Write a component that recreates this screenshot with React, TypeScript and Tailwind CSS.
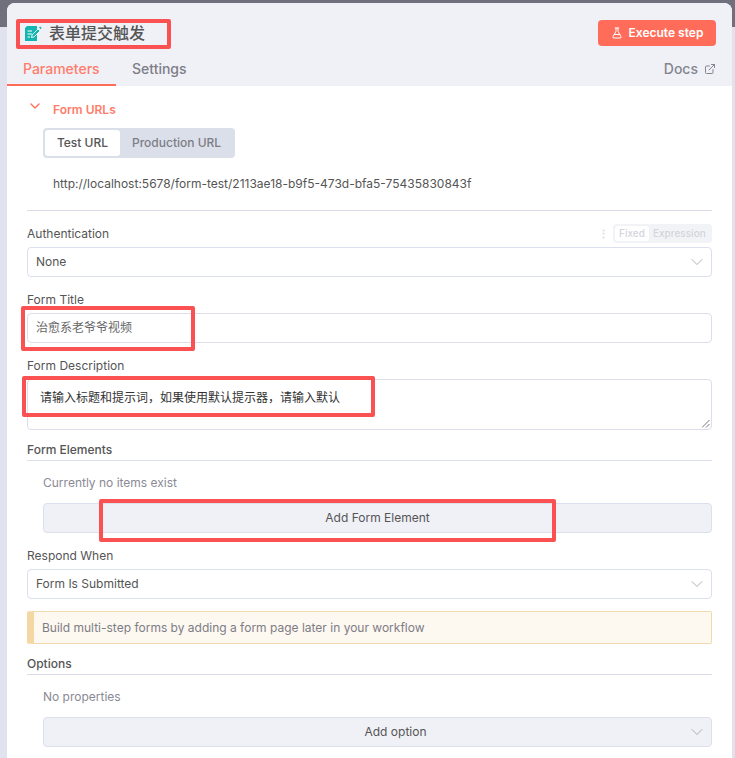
import { ChevronDown, ExternalLink, FlaskConical } from "lucide-react";

const FONT = "font-['Inter','Noto_Sans_CJK_SC',sans-serif]";

function Label({ text }: { text: string }) {
  return <div className="text-[12px] leading-[14px] text-[#555]">{text}</div>;
}

function SelectBox({ value }: { value: string }) {
  return (
    <div className="flex h-[30px] items-center justify-between rounded-[4px] border border-[#dcdfec] bg-white pl-2 pr-[4px] text-[12px] text-[#555]">
      <span>{value}</span>
      <ChevronDown size={20} strokeWidth={0.8} className="text-[#8a8a92]" />
    </div>
  );
}

function FormIcon() {
  return (
    <svg width="17" height="15" viewBox="0 0 17 15" className="shrink-0">
      <path d="M0 2 2 0h10v15H0z" fill="#12b5b0" />
      <path d="M2.5 5h4.5M2.5 8h4.5M2.5 11h2.5" stroke="#fff" strokeWidth="1" fill="none" />
      <path d="m6.5 11.5.6-2.6 6-6 2 2-6 6z" fill="#12b5b0" stroke="#fff" strokeWidth="0.9" />
      <path d="m14 1.6 1.2-1 1.4 1.4-1 1.2z" fill="#12b5b0" />
    </svg>
  );
}

function Mark({ className }: { className: string }) {
  return <div className={`pointer-events-none absolute rounded-[2px] border-4 border-[#fa5252] ${className}`} />;
}

export default function App() {
  return (
    <div className={`relative h-[758px] w-[735px] overflow-hidden bg-[#e0e3ee] ${FONT}`}>
      <div className="absolute left-0 top-0 h-[27px] w-full bg-[#706f7c]" />
      <div className="relative mx-[7px] mt-[3px] flex h-[755px] w-[725px] flex-col overflow-hidden rounded-t-[8px] bg-white">
        {/* header */}
        <div className="h-[83px] bg-[#f0f1f7]">
          <div className="flex h-[56px] items-center justify-between pl-[18px] pr-4 pt-[4px]">
            <div className="flex items-center gap-[7px]">
              <FormIcon />
              <span className="text-[16px] font-medium text-[#555]">表单提交触发</span>
            </div>
            <div className="flex h-[26px] w-[118px] items-center justify-center gap-[6px] rounded-[4px] bg-[#ff6d5a] text-[12px] font-semibold text-white">
              <FlaskConical size={12} />
              <span>Execute step</span>
            </div>
          </div>
          <div className="flex h-[27px] items-start justify-between text-[14px]">
            <div className="flex">
              <div className="h-[27px] w-[109px] border-b-2 border-[#ff6d5a] pl-4 font-medium leading-[19px] text-[#ff7c6b]">Parameters</div>
              <div className="ml-4 font-medium leading-[19px] text-[#7d7d87]">Settings</div>
            </div>
            <div className="flex items-center gap-[6px] pr-[16px] font-medium leading-[19px] text-[#85858f]">
              <span>Docs</span>
              <ExternalLink size={12} />
            </div>
          </div>
        </div>

        {/* body */}
        <div className="px-5">
          <div className="flex items-center pt-[17px] text-[12px] font-semibold leading-[14px] text-[#ff7c6b]">
            <ChevronDown size={16} className="-mt-[8px] mr-[10px] text-[#ff6d5a]" />
            <span>Form URLs</span>
          </div>
          <div className="ml-4 mt-[11px] flex h-[30px] w-[192px] items-center rounded-[4px] bg-[#dbdfe9] pl-[2px] text-[12px] font-medium">
            <div className="flex h-[26px] w-[75px] items-center justify-center rounded-[3px] bg-white text-[#555]">Test URL</div>
            <div className="flex-1 pl-[12px] text-[#7d7d87]">Production URL</div>
          </div>
          <div className="ml-[26px] mt-[18px] text-[12px] leading-[15px] text-[#555]">http://localhost:5678/form-test/2113ae18-b9f5-473d-bfa5-75435830843f</div>
          <div className="mt-[19px] border-t border-[#dcdcea]" />

          <div className="mt-[13px] flex h-[19px] items-center justify-between">
            <Label text="Authentication" />
            <div className="flex items-center gap-[4px]">
              <span className="text-[11px] font-bold leading-[12px] text-[#d6d6dc]">⋮</span>
              <div className="flex h-[19px] w-[99px] items-center rounded-[4px] bg-[#f2f3f7] pl-[2px] text-[10px] font-medium text-[#d4d4da]">
                <div className="flex h-[15px] w-[34px] items-center justify-center rounded-[3px] bg-white">Fixed</div>
                <div className="pl-[4px]">Expression</div>
              </div>
            </div>
          </div>
          <div className="mt-[4px]">
            <SelectBox value="None" />
          </div>

          <div className="mt-[16px]">
            <Label text="Form Title" />
          </div>
          <div className="mt-[6px] flex h-[30px] items-center rounded-[4px] border border-[#dcdfe9] pl-2 text-[12px] text-[#666]">治愈系老爷爷视频</div>

          <div className="mt-[16px]">
            <Label text="Form Description" />
          </div>
          <div className="relative mt-[6px] h-[51px] rounded-[4px] border border-[#dcdfe9] pl-3 pt-[9px] text-[12px] leading-[18px] text-[#333]">
            请输入标题和提示词，如果使用默认提示器，请输入默认
            <svg width="8" height="8" viewBox="0 0 8 8" className="absolute bottom-[1px] right-[1px]">
              <path d="M0 7.5 7.5 0M4 7.5 7.5 4" stroke="#555" strokeWidth="0.8" />
            </svg>
          </div>

          <div className="mt-[13px] border-b border-[#dcdfec] pb-[3px] text-[12px] font-medium leading-[14px] text-[#555]">Form Elements</div>
          <div className="ml-4 mt-[15px] text-[12px] leading-[14px] text-[#8a8a94]">Currently no items exist</div>
          <div className="ml-4 mt-[13px] flex h-[30px] items-center justify-center rounded-[4px] border border-[#dcdfec] bg-[#f0f1f7] text-[12px] text-[#555]">Add Form Element</div>

          <div className="mt-[16px]">
            <Label text="Respond When" />
          </div>
          <div className="mt-[6px]">
            <SelectBox value="Form Is Submitted" />
          </div>

          <div className="mt-[12px] flex h-[33px] items-center rounded-[2px] border border-l-[7px] border-[#f0d9ac] border-l-[#f5d7a3] bg-[#fdf8f0] pl-2 text-[12px] text-[#7d7d87]">
            Build multi-step forms by adding a form page later in your workflow
          </div>

          <div className="mt-[13px] border-b border-[#dcdcea] pb-[3px] text-[12px] font-medium leading-[14px] text-[#555]">Options</div>
          <div className="ml-4 mt-[15px] text-[12px] leading-[14px] text-[#8a8a94]">No properties</div>
          <div className="relative ml-4 mt-[13px] flex h-[30px] items-center justify-center rounded-[4px] border border-[#dcdfec] bg-[#f0f1f7] pl-[36px] text-[12px] text-[#555]">
            Add option
            <ChevronDown size={20} strokeWidth={0.8} className="absolute right-[4px] text-[#8a8a92]" />
          </div>
        </div>
      </div>

      {/* annotation boxes drawn over the screenshot */}
      <Mark className="left-[16px] top-[19px] h-[30px] w-[155px]" />
      <Mark className="left-[21px] top-[306px] h-[45px] w-[174px]" />
      <Mark className="left-[22px] top-[376px] h-[41px] w-[353px]" />
      <Mark className="left-[99px] top-[499px] h-[43px] w-[457px]" />
    </div>
  );
}
